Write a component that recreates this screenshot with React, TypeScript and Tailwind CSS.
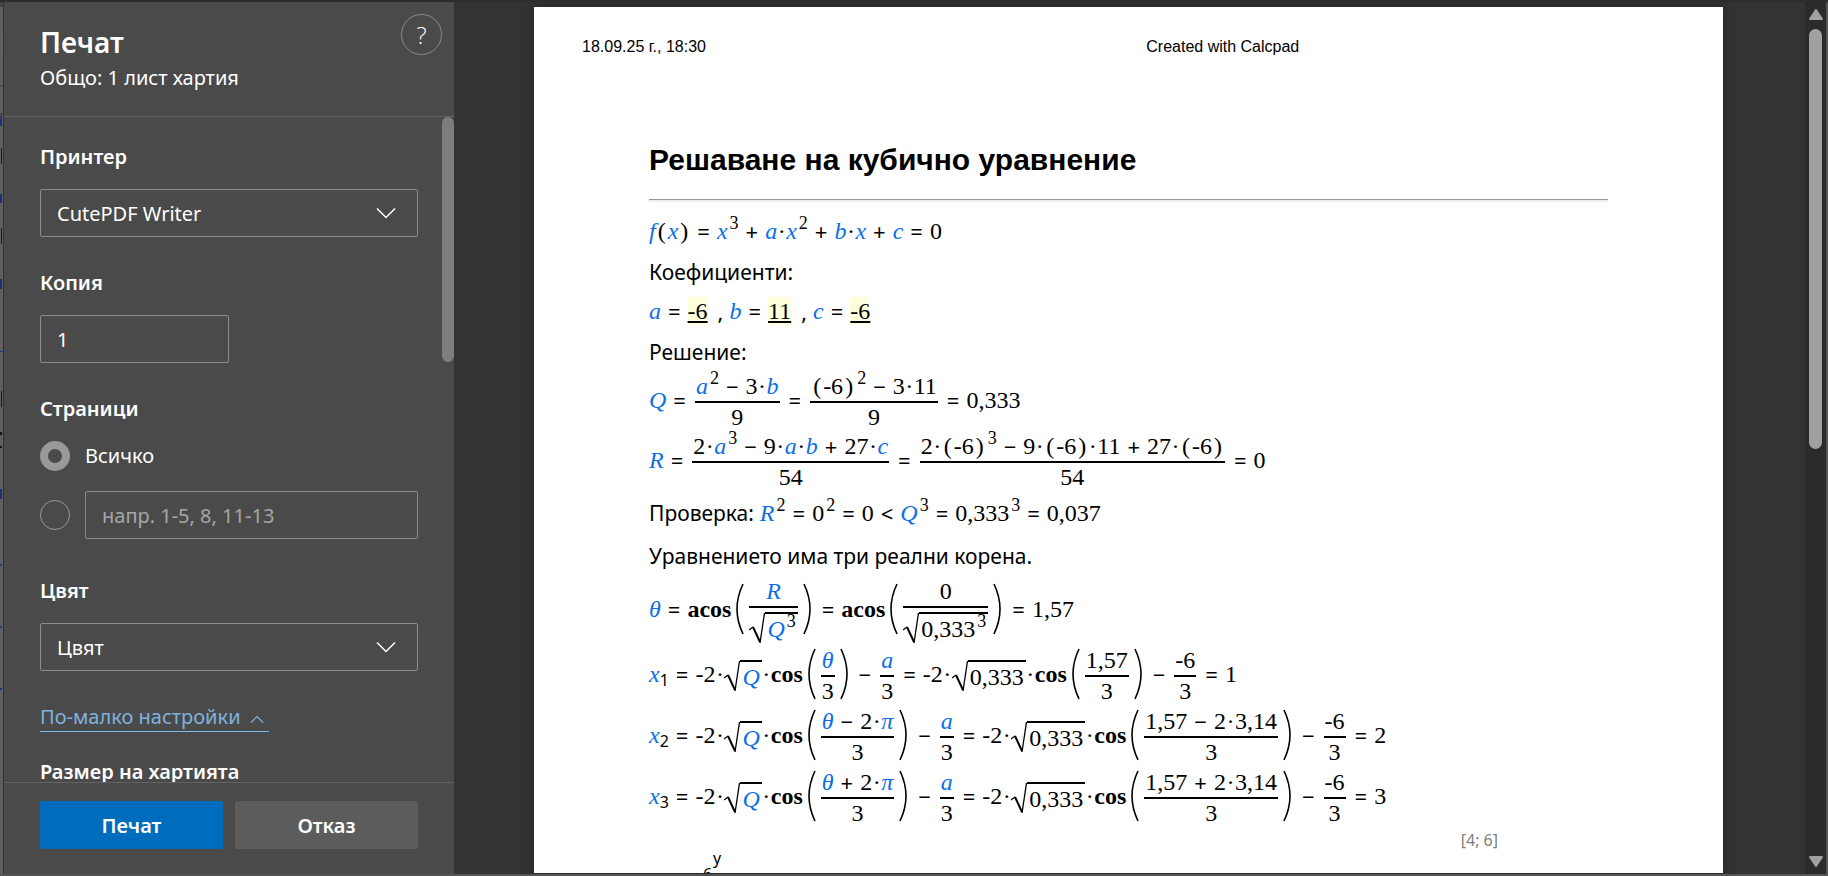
import type { ReactNode } from 'react'

function Var({ children }: { children: ReactNode }) {
  return <i className="text-[#0a6fe8]">{children}</i>
}

function Op({ children }: { children: ReactNode }) {
  return <span className="mx-[7px] font-['Noto_Sans',sans-serif] text-[22px]">{children}</span>
}

function Comma() {
  return <span className="ml-2.5 mr-1.5 font-['Noto_Sans',sans-serif] text-[22px]">,</span>
}

function Dot() {
  return <span className="w-[9px] text-center">·</span>
}

function Paren({ children }: { children: ReactNode }) {
  return (
    <>
      <span className="mx-0.5">(</span>
      {children}
      <span className="mx-0.5">)</span>
    </>
  )
}

function Sup({ children }: { children: ReactNode }) {
  return <span className="-mt-4 ml-0.5 text-lg">{children}</span>
}

function Sub({ children }: { children: ReactNode }) {
  return <span className="mt-3 font-['Noto_Sans',sans-serif] text-base">{children}</span>
}

function Frac({ top, bottom }: { top: ReactNode; bottom: ReactNode }) {
  return (
    <span className="mx-0.5 mt-1 inline-flex flex-col items-stretch">
      <span className="flex h-[30px] items-center justify-center border-b-2 border-black px-px pb-0.5">{top}</span>
      <span className="flex min-h-7 items-center justify-center">{bottom}</span>
    </span>
  )
}

function Root({ children }: { children: ReactNode }) {
  return (
    <span className="mt-1 inline-flex items-start">
      <svg className="h-8 w-4" viewBox="0 0 16 32" fill="none" stroke="black">
        <path d="M0 18l4-3" strokeWidth="1.2" />
        <path d="M4 15l7 15" strokeWidth="2" />
        <path d="M11 31L15.5 1" strokeWidth="1.3" />
      </svg>
      <span className="flex h-8 items-center border-t-2 border-black px-0.5">{children}</span>
    </span>
  )
}

function Group({ children }: { children: ReactNode }) {
  return (
    <>
      <svg className="ml-[5px] mr-[3px] h-[52px] w-2 shrink-0" viewBox="0 0 8 52" fill="none" stroke="black" strokeWidth="1.6">
        <path d="M7 1Q-5 26 7 51" />
      </svg>
      {children}
      <svg className="ml-[3px] mr-1 h-[52px] w-2 shrink-0" viewBox="0 0 8 52" fill="none" stroke="black" strokeWidth="1.6">
        <path d="M1 1Q13 26 1 51" />
      </svg>
    </>
  )
}

function Line({ className, children }: { className: string; children: ReactNode }) {
  return (
    <div className={`flex items-center whitespace-pre font-['Liberation_Serif',serif] text-2xl leading-7 ${className}`}>
      {children}
    </div>
  )
}

function Note({ children }: { children: ReactNode }) {
  return <p className="h-10 font-['Noto_Sans',sans-serif] text-[21px] leading-[42px]">{children}</p>
}

function Given({ children }: { children: ReactNode }) {
  return <span className="bg-[#ffffdd] underline decoration-2 underline-offset-2">{children}</span>
}

function RootLine({ index, arg, value, result }: { index: string; arg: ReactNode; value: ReactNode; result: string }) {
  return (
    <Line className="h-[61px]">
      <Var>x</Var><Sub>{index}</Sub><Op>=</Op>-2<Dot /><Root><Var>Q</Var></Root><Dot /><b>cos</b>
      <Group><Frac top={arg} bottom="3" /></Group>
      <Op>−</Op><Frac top={<Var>a</Var>} bottom="3" /><Op>=</Op>-2<Dot /><Root>0,333</Root><Dot /><b>cos</b>
      <Group><Frac top={value} bottom="3" /></Group>
      <Op>−</Op><Frac top="-6" bottom="3" /><Op>=</Op>{result}
    </Line>
  )
}

function Chevron() {
  return (
    <svg className="pointer-events-none absolute right-[22px] top-[18px] h-3 w-5" viewBox="0 0 20 12" fill="none" stroke="white" strokeWidth="1.5">
      <path d="M1 1.5L10 10.5L19 1.5" />
    </svg>
  )
}

function SelectBox({ id, value }: { id: string; value: string }) {
  return (
    <div className="relative">
      <select id={id} className="block h-12 w-full appearance-none rounded-xs border border-[#8c8c8c] bg-transparent px-4 pt-0.5">
        <option>{value}</option>
      </select>
      <Chevron />
    </div>
  )
}

const label = 'block text-xl font-semibold leading-7'

function PrintPanel() {
  return (
    <aside className="flex w-[450px] shrink-0 flex-col bg-[#4a4a4a] font-['Noto_Sans',sans-serif] text-xl text-white">
      <header className="flex h-[115px] shrink-0 items-start justify-between border-b border-[#636363] pl-9 pr-3 pt-3">
        <div className="pt-2.5">
          <h1 className="text-[28px] font-semibold leading-9">Печат</h1>
          <p className="leading-9">Общо: 1 лист хартия</p>
        </div>
        <button aria-label="Помощ" className="flex size-[41px] items-center justify-center rounded-full border border-[#8c8c8c] font-['Open_Sans'] text-2xl font-light">?</button>
      </header>
      <div className="flex min-h-0 flex-1 overflow-hidden">
        <form className="min-w-0 flex-1 pl-9 pr-6 pt-[26px]">
          <label htmlFor="printer" className={label}>Принтер</label>
          <div className="mt-[18px]"><SelectBox id="printer" value="CutePDF Writer" /></div>
          <label htmlFor="copies" className={`mt-8 ${label}`}>Копия</label>
          <input id="copies" defaultValue="1" className="mt-[18px] block h-12 w-[189px] rounded-xs border border-[#8c8c8c] bg-transparent px-4" />
          <fieldset className="mt-8">
            <legend className={label}>Страници</legend>
            <label className="mt-[17px] flex h-8 items-center gap-[15px]">
              <input type="radio" name="pages" defaultChecked className="size-[30px] appearance-none rounded-full border border-[#999] checked:border-8" />
              Всичко
            </label>
            <div className="mt-[19px] flex items-center gap-[15px]">
              <input type="radio" name="pages" aria-label="Избрани страници" className="size-[30px] shrink-0 appearance-none rounded-full border border-[#999] checked:border-8" />
              <input aria-label="Страници" placeholder="напр. 1-5, 8, 11-13" className="h-12 min-w-0 flex-1 rounded-xs border border-[#8c8c8c] bg-transparent px-4 placeholder:text-[#a6a6a6]" />
            </div>
          </fieldset>
          <label htmlFor="color" className={`mt-[38px] ${label}`}>Цвят</label>
          <div className="mt-[18px]"><SelectBox id="color" value="Цвят" /></div>
          <a href="#less" className="mt-8 inline-flex h-[29px] items-center gap-2 border-b border-[#7fb9e6] pr-1 text-[#7fb3de]">
            По-малко настройки
            <svg className="mt-1 h-2 w-4" viewBox="0 0 16 8" fill="none" stroke="currentColor" strokeWidth="1.2"><path d="M2 7.5L8 1.5L14 7.5" /></svg>
          </a>
          <p className={`mt-[26px] ${label}`}>Размер на хартията</p>
        </form>
        <div className="w-3 shrink-0"><div className="h-[245px] rounded-full bg-[#7d7d7d]" /></div>
      </div>
      <footer className="grid h-[92px] shrink-0 grid-cols-2 gap-3 border-t border-[#636363] pl-9 pr-9 pt-[18px] font-semibold">
        <button className="h-12 rounded-xs bg-[#006cbe] pt-0.5">Печат</button>
        <button className="h-12 rounded-xs bg-[#5c5c5c] pt-0.5">Отказ</button>
      </footer>
    </aside>
  )
}

function EditorSliver() {
  return (
    <svg className="h-full w-[3px] shrink-0 bg-[#5e5e5e]" viewBox="0 0 3 872" preserveAspectRatio="none">
      <path d="M0 0h3v5H0zM0 83h3v1H0z" fill="#444" />
      <path d="M1 33h1v22H1z" fill="#8a6414" />
      <path d="M1 146h1v16H1zM1 226h1v16H1zM1 389h1v16H1z" fill="#3a0c00" />
      <path d="M1 111h1v13H0v-4zM0 192h2v9H0zM0 277h2v10H0zM0 487h2v10H0z" fill="#1c2f78" />
      <path d="M0 430h2v3H0zM0 444h2v2H0z" fill="#1d1208" />
      <path d="M0 349h3v1H0zM0 562h2v2H0zM0 624h2v2H0zM0 686h2v2H0z" fill="#123f7a" />
    </svg>
  )
}

export default function App() {
  return (
    <div className="flex h-screen overflow-hidden border-b-2 border-t-2 border-b-[#555] border-t-[#2d2d2d] bg-[#333] text-black">
      <EditorSliver />
      <div className="w-px shrink-0" />
      <PrintPanel />
      <main className="flex min-w-0 flex-1 justify-center pb-px pl-20 pr-[82px] pt-[5px]">
        <article className="min-w-0 flex-1 overflow-hidden bg-white pl-12 pr-[115px] pt-7 shadow-[0_0_8px_#222]">
          <div className="flex font-['Liberation_Sans',sans-serif] text-base leading-6">
            <span className="w-[55%]">18.09.25 г., 18:30</span>
            <span>Created with Calcpad</span>
          </div>
          <div className="pl-[67px]">
            <h2 className="mt-[81px] font-['Liberation_Sans',sans-serif] text-3xl font-bold leading-10">Решаване на кубично уравнение</h2>
            <hr className="mb-[9px] mt-[19px] h-[3px] border-0 border-t border-[#999] bg-[#eee]" />
            <Line className="h-10">
              <Var>f</Var><Paren><Var>x</Var></Paren><Op>=</Op><Var>x</Var><Sup>3</Sup><Op>+</Op><Var>a</Var><Dot /><Var>x</Var><Sup>2</Sup><Op>+</Op><Var>b</Var><Dot /><Var>x</Var><Op>+</Op><Var>c</Var><Op>=</Op>0
            </Line>
            <Note>Коефициенти:</Note>
            <Line className="h-10">
              <Var>a</Var><Op>=</Op><Given>-6</Given><Comma /><Var>b</Var><Op>=</Op><Given>11</Given><Comma /><Var>c</Var><Op>=</Op><Given>-6</Given>
            </Line>
            <Note>Решение:</Note>
            <Line className="h-[57px]">
              <Var>Q</Var><Op>=</Op>
              <Frac top={<><Var>a</Var><Sup>2</Sup><Op>−</Op>3<Dot /><Var>b</Var></>} bottom="9" />
              <Op>=</Op>
              <Frac top={<><Paren>-6</Paren><Sup>2</Sup><Op>−</Op>3<Dot />11</>} bottom="9" />
              <Op>=</Op>0,333
            </Line>
            <Line className="h-[63px]">
              <Var>R</Var><Op>=</Op>
              <Frac top={<>2<Dot /><Var>a</Var><Sup>3</Sup><Op>−</Op>9<Dot /><Var>a</Var><Dot /><Var>b</Var><Op>+</Op>27<Dot /><Var>c</Var></>} bottom="54" />
              <Op>=</Op>
              <Frac top={<>2<Dot /><Paren>-6</Paren><Sup>3</Sup><Op>−</Op>9<Dot /><Paren>-6</Paren><Dot />11<Op>+</Op>27<Dot /><Paren>-6</Paren></>} bottom="54" />
              <Op>=</Op>0
            </Line>
            <Line className="h-11">
              <span className="mr-1.5 font-['Noto_Sans',sans-serif] text-[21px]">Проверка:</span>
              <Var>R</Var><Sup>2</Sup><Op>=</Op>0<Sup>2</Sup><Op>=</Op>0<Op>&lt;</Op><Var>Q</Var><Sup>3</Sup><Op>=</Op>0,333<Sup>3</Sup><Op>=</Op>0,037
            </Line>
            <Note>Уравнението има три реални корена.</Note>
            <Line className="h-[68px]">
              <Var>θ</Var><Op>=</Op><b>acos</b>
              <Group><Frac top={<Var>R</Var>} bottom={<Root><Var>Q</Var><Sup>3</Sup></Root>} /></Group>
              <Op>=</Op><b>acos</b>
              <Group><Frac top="0" bottom={<Root>0,333<Sup>3</Sup></Root>} /></Group>
              <Op>=</Op>1,57
            </Line>
            <RootLine index="1" arg={<Var>θ</Var>} value="1,57" result="1" />
            <RootLine index="2" arg={<><Var>θ</Var><Op>−</Op>2<Dot /><Var>π</Var></>} value={<>1,57<Op>−</Op>2<Dot />3,14</>} result="2" />
            <RootLine index="3" arg={<><Var>θ</Var><Op>+</Op>2<Dot /><Var>π</Var></>} value={<>1,57<Op>+</Op>2<Dot />3,14</>} result="3" />
            <p className="pr-[110px] pt-0.5 text-right font-['Noto_Sans',sans-serif] text-base leading-6 text-[#808080]">[4; 6]</p>
            <p className="pl-16 font-['Noto_Sans',sans-serif] text-base leading-3">y</p>
            <p className="pl-[54px] font-['Noto_Sans',sans-serif] text-base leading-5">6</p>
          </div>
        </article>
      </main>
      <div className="flex w-[23px] shrink-0 flex-col items-center justify-between border-r-2 border-[#555] bg-[#2b2b2b] py-1.5">
        <svg className="h-3 w-4" viewBox="0 0 16 12" fill="#a0a0a0" stroke="#a0a0a0" strokeWidth="2" strokeLinejoin="round"><path d="M8 2L14 11H2Z" /></svg>
        <div className="mb-auto mt-[9px] h-[420px] w-[13px] rounded-full bg-[#a0a0a0]" />
        <svg className="h-3 w-4" viewBox="0 0 16 12" fill="#a0a0a0" stroke="#a0a0a0" strokeWidth="2" strokeLinejoin="round"><path d="M8 10L14 1H2Z" /></svg>
      </div>
    </div>
  )
}
